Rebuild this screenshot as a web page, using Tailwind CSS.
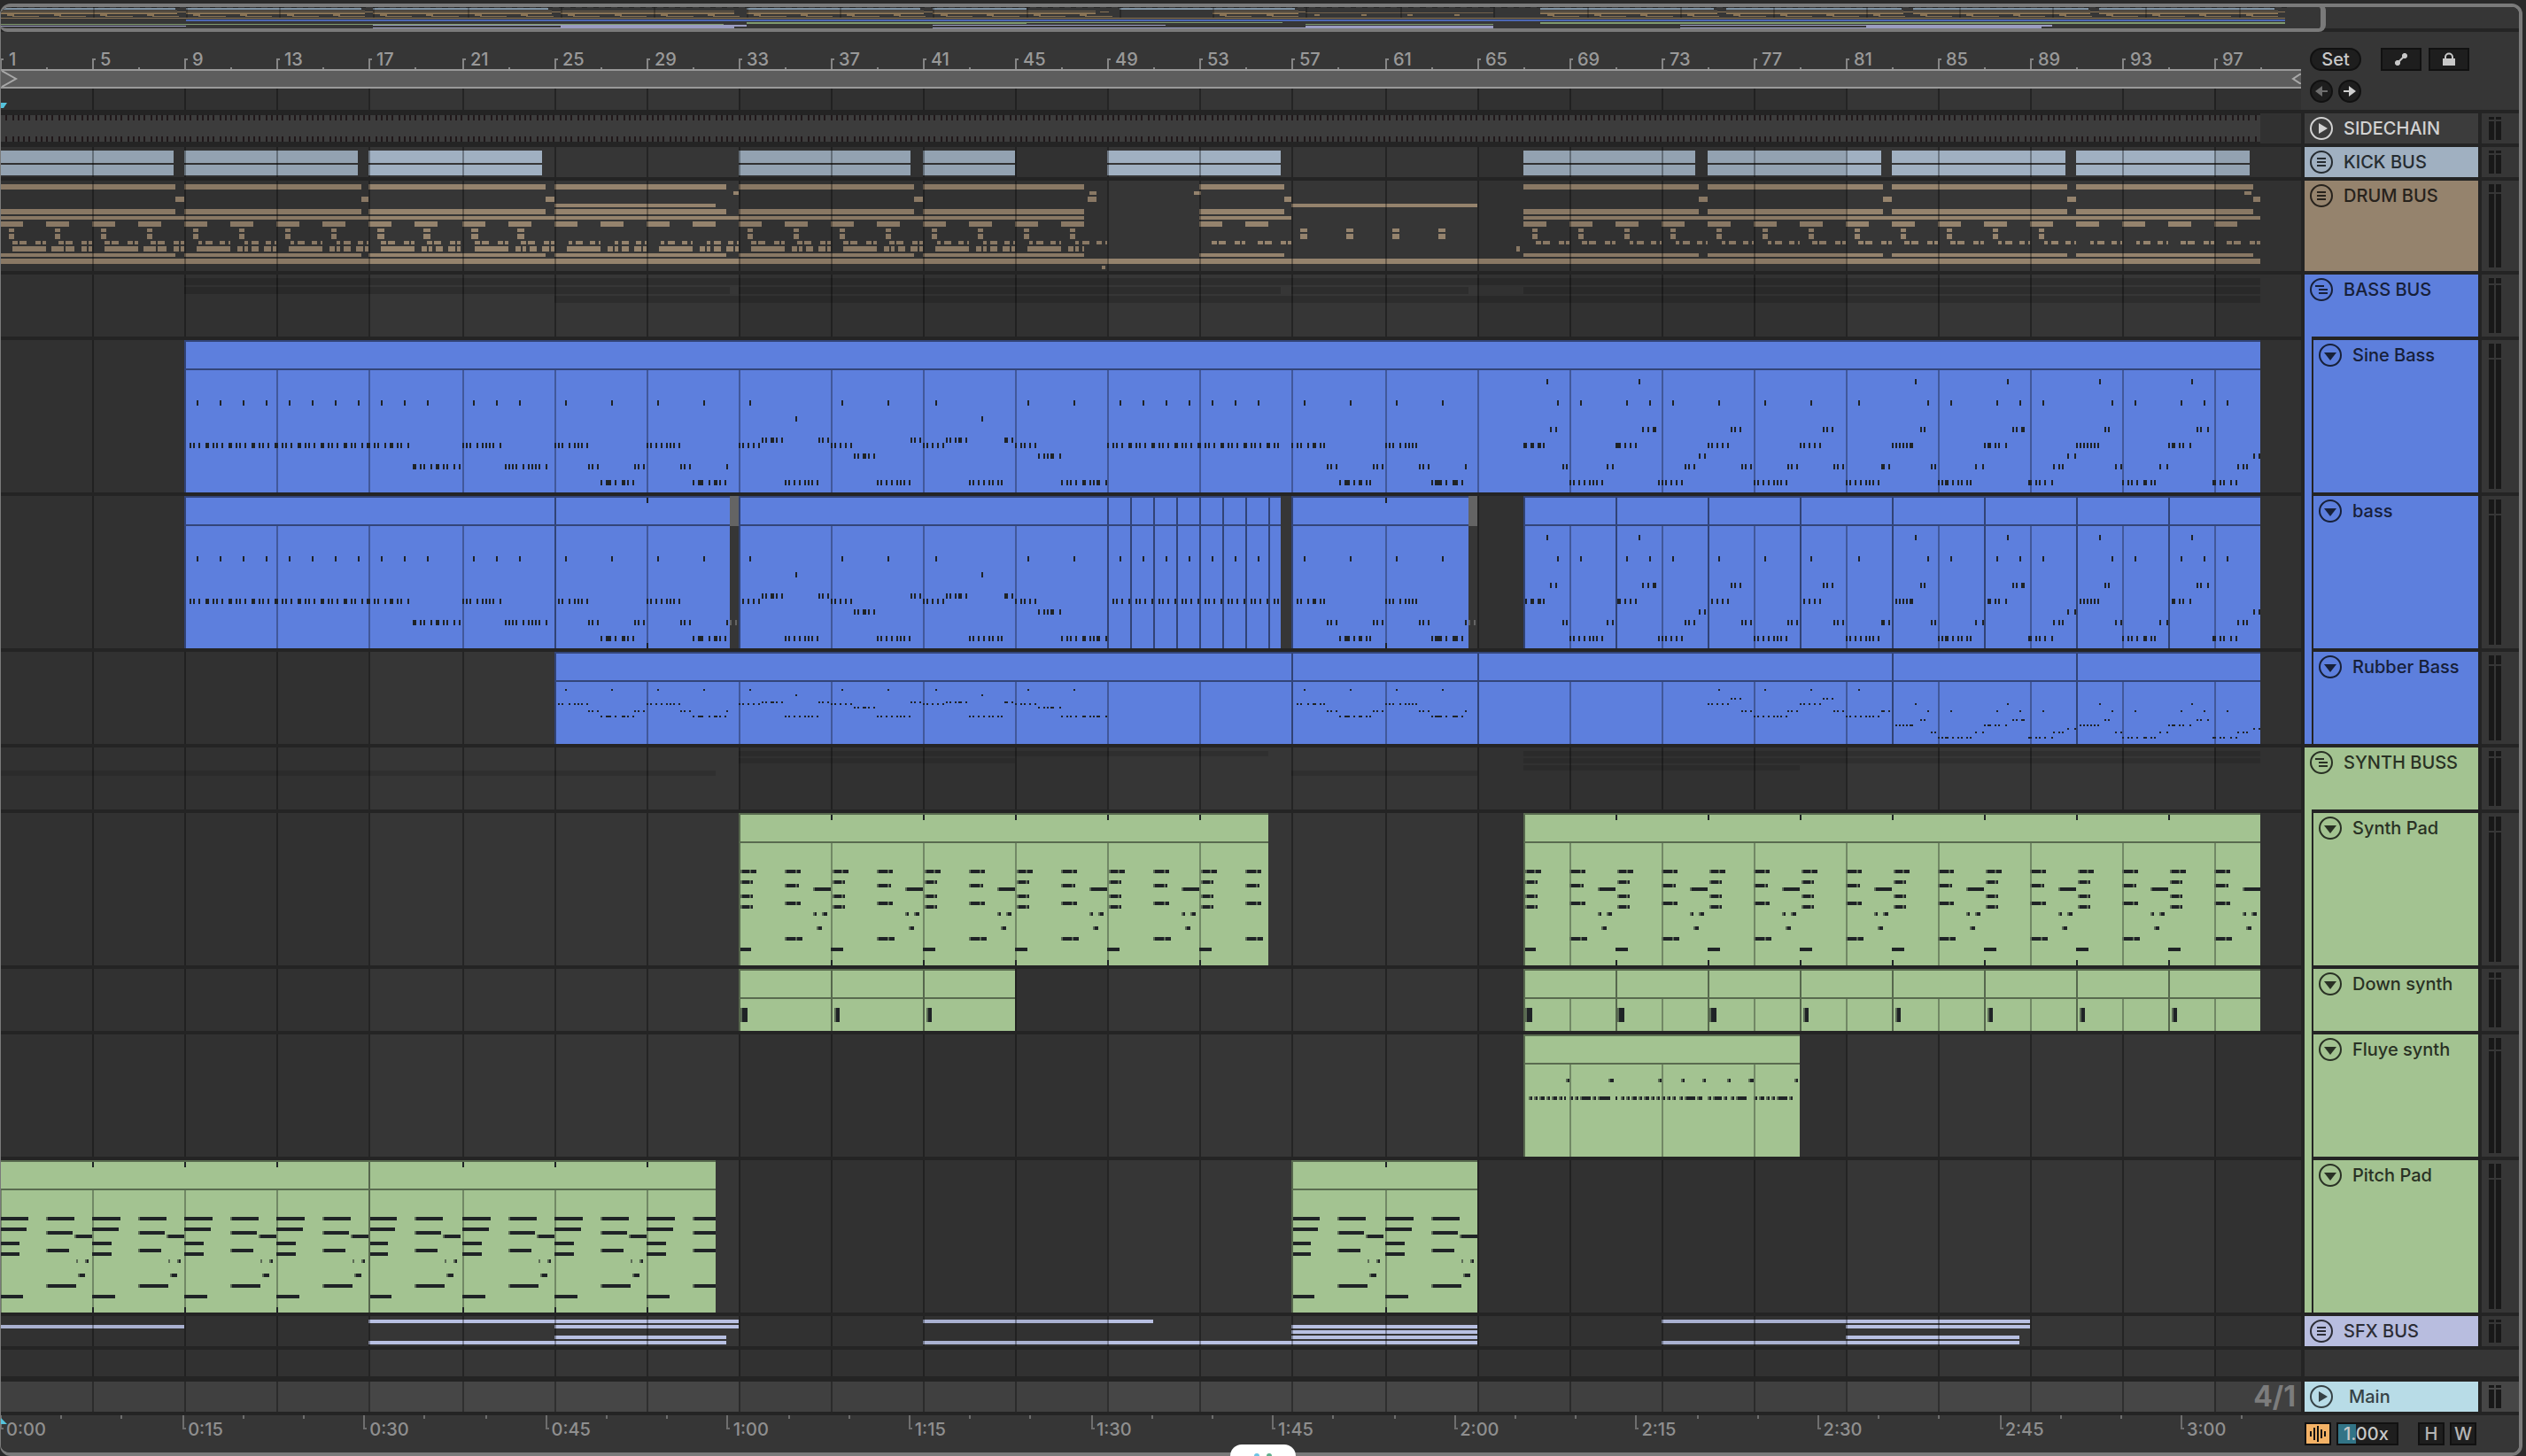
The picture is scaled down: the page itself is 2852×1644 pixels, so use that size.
<!DOCTYPE html>
<html lang="en">
<head>
    <meta charset="UTF-8">
    <meta name="viewport" content="width=device-width, initial-scale=1.0">
    <title>Arrangement View</title>
    <script src="https://cdn.jsdelivr.net/npm/@tailwindcss/browser@4"></script>
</head>
<body class="min-h-screen bg-[#2a2a2a] pt-1 pr-1 font-['Inter',sans-serif] text-xl leading-6 font-medium">

    <main class="overflow-hidden rounded-xl border-4 border-l border-[#7a7a7a] bg-[#242424]">

        <!-- Overview -->
        <div class="relative mb-1 h-6 bg-[#363636]">
            <svg id="overview" class="block h-full w-full" viewBox="1 0 2812 24" preserveAspectRatio="none"></svg>
            <div class="absolute -top-1 -left-px h-8 w-[92.35%] rounded-lg border-4 border-r-[6px] border-l-0 border-[#7a7a7a]"></div>
        </div>

        <!-- Rulers and locator controls -->
        <div class="mb-1 flex bg-[#363636]">
            <div class="min-w-0 flex-1">
                <div class="relative h-[42px]">
                    <svg id="barTicks" class="absolute inset-0 h-full w-full" viewBox="1 0 2597 42" preserveAspectRatio="none"></svg>
                    <div id="barLabels" class="relative grid pt-[19px] text-[#999999]"></div>
                </div>
                <div class="flex h-[22px] items-center justify-between border-y-2 border-[#999999] bg-[#5d5d5d]">
                    <svg class="h-[18px] w-5" viewBox="0 0 20 18" fill="none" stroke="#a8a8a8" stroke-width="2"><path d="M1 0L17 9L1 18"/></svg>
                    <svg class="h-3 w-3" viewBox="0 0 12 12" fill="none" stroke="#a8a8a8" stroke-width="2"><path d="M12 0L3 6L12 12"/></svg>
                </div>
                <svg id="scrub" class="block h-6 w-full" viewBox="1 0 2597 24" preserveAspectRatio="none"></svg>
            </div>
            <div class="w-[246px] pt-[18px] pl-[10px]">
                <div class="flex items-center">
                    <button class="h-[26px] w-[58px] rounded-full border-2 border-[#111111] bg-[#1e1e1e] leading-5 text-[#c8c8c8]">Set</button>
                    <button aria-label="Automation" class="ml-[22px] flex h-[26px] w-[46px] items-center justify-center border-2 border-[#111111] bg-[#1e1e1e]">
                        <svg class="h-4 w-4" viewBox="0 0 16 16" fill="#c8c8c8" stroke="#c8c8c8"><path stroke-width="2" d="M4 12L12 4"/><circle cx="4" cy="12" r="2.6"/><circle cx="12" cy="4" r="2.6"/></svg>
                    </button>
                    <button aria-label="Lock envelopes" class="ml-2 flex h-[26px] w-[46px] items-center justify-center border-2 border-[#111111] bg-[#1e1e1e]">
                        <svg class="h-4 w-4" viewBox="0 0 16 16"><rect x="1" y="7" width="14" height="8" fill="#c8c8c8"/><path d="M4 8V5.500a4 4 0 0 1 8 0V8" fill="none" stroke="#c8c8c8" stroke-width="2"/></svg>
                    </button>
                </div>
                <div class="mt-[10px] flex gap-[6px]">
                    <button aria-label="Previous locator" class="flex h-[26px] w-[26px] items-center justify-center rounded-full border-2 border-[#111111] bg-[#1e1e1e]">
                        <svg class="h-4 w-4 shrink-0" viewBox="0 0 16 16" fill="#6e6e6e"><path d="M1 8L9 2V7H15V9H9V14Z"/></svg>
                    </button>
                    <button aria-label="Next locator" class="flex h-[26px] w-[26px] items-center justify-center rounded-full border-2 border-[#111111] bg-[#1e1e1e]">
                        <svg class="h-4 w-4 shrink-0" viewBox="0 0 16 16" fill="#d0d0d0"><path d="M15 8L7 2V7H1V9H7V14Z"/></svg>
                    </button>
                </div>
            </div>
        </div>

        <!-- Tracks are filled in by the script below -->
        <div id="tracks"></div>

        <!-- Time ruler and footer controls -->
        <div class="flex h-[42px] bg-[#363636]">
            <div class="relative min-w-0 flex-1">
                <svg id="timeTicks" class="absolute inset-0 h-full w-full" viewBox="1 0 2597 42" preserveAspectRatio="none"></svg>
                <div id="timeLabels" class="relative grid pt-1 text-[#8f8f8f]"></div>
            </div>
            <div class="flex w-[246px] items-start pt-2 pl-1">
                <button aria-label="Warp" class="flex h-[26px] w-[30px] items-center justify-center border-2 border-[#111111] bg-[#f4b266]">
                    <svg class="h-5 w-5" viewBox="0 0 20 20" stroke="#111111" stroke-width="2"><path d="M2 7V13M6 3V17M10 1V19M14 5V15M18 7V13"/></svg>
                </button>
                <input aria-label="Playback rate" value="1.00x" class="ml-[6px] h-[26px] w-[70px] border-2 border-[#111111] bg-linear-to-r from-[#327486] from-30% to-[#1e1e1e] to-30% pl-[6px] text-[#c8c8c8] outline-none">
                <button class="ml-[22px] h-[26px] w-[30px] border-2 border-[#111111] bg-[#1e1e1e] leading-5 text-[#b5b5b5]">H</button>
                <button class="ml-[6px] h-[26px] w-[30px] border-2 border-[#111111] bg-[#1e1e1e] leading-5 text-[#b5b5b5]">W</button>
            </div>
        </div>
    </main>

    <!-- Dock handle -->
    <div class="fixed bottom-0 left-1/2 flex h-[13px] w-[74px] -translate-x-1/2 items-end justify-center gap-2 overflow-hidden rounded-t-2xl bg-white">
        <span class="h-[3px] w-[6px] rounded-t-full bg-[#6cc4e4]"></span>
        <span class="h-[3px] w-[6px] rounded-t-full bg-[#5fae8c]"></span>
    </div>

    <script>
        const END = 2552;
        const GRID = [0, 104, 208, 312, 416, 522, 626, 730, 834, 938, 1042, 1146, 1250, 1354, 1458, 1564, 1668, 1772, 1876, 1980, 2084, 2188, 2292, 2396, 2500];
        const SHADE = [[0, 416], [834, 1250], [1668, 2084], [2500, 2598]];
        const BLUE = '#5d7fdd', GREEN = '#a3c391', INK = '#1f2326';

        // ---- drawing helpers ----
        const box = (x, y, w, h) => `M${x} ${y}h${w}v${h}h${-w}z`;
        const path = (d, fill, op = 1) => `<path d="${d}" fill="${fill}" fill-opacity="${op}" shape-rendering="crispEdges"/>`;
        const spans = (list, y, h) => list.map(([a, b]) => box(a, y, b - a, h)).join('');
        const gridLines = (h, y = 0) => GRID.slice(1).map(x => box(x, y, 2, h)).join('');
        const shade = h => path(spans(SHADE, 0, h), '#000', 0.08);
        const grid = h => path(gridLines(h), '#000', 0.32);
        const steps = (from, to, by) => { const r = []; for (let x = from; x < to; x += by) r.push(x); return r; };

        // ---- bass notes: row offset -> "x" or "x:width" ----
        const NOTES = {
            44: '1746 1850 2162 2266 2370 2474',
            68: '222 248 274 300 326 352 378 404 430 456 482 534 560 586 638 690 742 794 846 950 1002 1056 1160 1212 1264 1290 1316 1342 1368 1394 1420 1472 1524 1576 1628 1758 1784 1836 1862 1888 1940 1992 2044 2098 2176 2202 2254 2280 2306 2384 2410 2462 2488 2514',
            86: '898 1108',
            98: '1750 1756 1854 1860 1866:4 1954 1958 1964 2058 2062 2068 2168 2172 2272 2276 2282:4 2376 2380 2480 2484 2492',
            110: '860 864 870:4 876 882 924 928 934 1028 1032 1038 1068 1072 1078 1082:4 1090 1134:4 1142',
            116: '214 218 224 232:4 240 244 250 258:4 266 270 276 284:4 292 296 302 310:4 318 322 328 336:4 344 348 354 362:4 370 374 380 388:4 396 400 408 414:4 422 426 434 440:4 448 452 460 522 526 530 538 544 548 552 556 564 626 630 634 642 648 652 656 662 730 734 740 746 752 756 760 766 834 838 844 850 856 938 942 948 954 960 1042 1046 1052 1058 1064 1146 1152 1156 1162 1168 1250 1256 1260 1266 1274:4 1282 1286 1292 1300:4 1308 1312 1318 1326:4 1334 1338 1344 1352:4 1360 1364 1370 1378:4 1386 1390 1396 1404:4 1412 1416 1422 1430:4 1438 1442 1458 1464 1468 1476 1482:4 1490 1494 1564 1568 1572 1580 1586 1590 1594 1598 1720:4 1728:4 1736:4 1742 1824:6 1834 1840 1846 1928 1932 1938 1944 1950 2032 2036 2042 2048 2054 2136 2140 2144 2148 2152 2156:4 2240 2244:4 2252 2256 2264 2344 2348 2352 2356 2360 2364 2368 2448 2452:4 2460 2464 2472',
            128: '964 968 974:4 980 986 1172 1178 1182 1186:4 1196 1918 1924 2334 2342 2544 2550',
            140: '466:4 474 478 486 492:4 500 504 512 518 570 574 578 582 590 596 600 604 608 616 664 668 674 716 720 726 768 772 778 820 1498 1502 1508 1550 1554 1560 1602 1606 1612 1654 1764 1768 1814 1820 1902 1906 1912 1966 1970 1976 2018 2022 2028 2070 2074 2080 2124:4 2132 2180 2184 2230 2238 2318 2324 2328 2388 2394 2438 2446 2526 2532 2536',
            158: '678 684:6 694 702:4 708 714 782 788:6 800 806:4 812 818 886 890 896 902 908 912 916 922 990 994 1000 1006 1012 1016 1020 1026 1094 1098 1104 1110 1116 1120 1126 1130 1198 1204 1208 1214 1222:4 1230 1234 1238:4 1248 1512 1518:6 1528 1534:4 1542 1546 1616 1620:8 1632 1640:4 1644 1650 1772 1776 1782 1788 1794 1798 1802 1808 1872 1876 1880 1886 1892 1898 1980 1984 1990 1996 2002 2006 2010 2016 2084 2088 2094 2100 2106 2110 2114 2120 2188 2192 2196:4 2204 2210 2214 2220 2224 2290:4 2298 2302 2308 2316 2396 2402 2406 2412 2420:4 2428 2432 2498:4 2506 2510 2518 2524'
        };
        const NOTE_LIST = Object.entries(NOTES).flatMap(([y, s]) => s.split(' ').map(n => {
            const [x, w] = n.split(':').map(Number);
            return { x, y: +y, w: w || 2 };
        }));

        // ---- MIDI clip: body, header line, bar lines, notes, clip edges ----
        function midi(h, color, clips, edges, notes, ticks = []) {
            const inside = x => clips.some(([a, b]) => x >= a && x < b);
            return path(spans(clips, 0, h), color)
                + path(GRID.filter(x => inside(x) && !edges.includes(x)).map(x => box(x, 34, 2, h - 34)).join(''), '#000', 0.3)
                + path(spans(clips, 0, 2) + spans(clips, 32, 2), '#000', 0.45)
                + notes
                + path(edges.map(x => box(x, 2, 2, 30) + box(x, 34, 2, h - 34)).join(''), color)
                + path(edges.map(x => box(x, 2, 2, 30) + box(x, 34, 2, h - 34)).join(''), '#000', 0.47)
                + path(ticks.map(x => box(x, 2, 2, 6) + box(x, h - 6, 2, 6)).join(''), INK);
        }

        function padNotes(starts, shape, limit) {
            let ink = '', soft = '';
            starts.forEach(s => shape.forEach(([y, x, w, cut]) => {
                const a = s + x, b = Math.min(a + w, limit(s));
                if (b <= a) return;
                ink += box(a, y, b - a, 4);
                if (x > 0) soft += box(a, y, 2, 4);
                if (cut) soft += box(s + cut, y, 2, 4);
            }));
            return path(ink, INK) + path(soft, GREEN, 0.45);
        }
        const SYNTH_SHAPE = [[64, 2, 18, 12], [76, 2, 14, 12], [92, 2, 14, 12], [104, 2, 14, 12], [152, 0, 14], [64, 52, 18, 64], [80, 52, 16, 64], [100, 52, 18, 64], [140, 52, 20, 64], [84, 84, 20], [112, 84, 4], [112, 94, 6], [128, 88, 6]];
        const PITCH_SHAPE = [[64, 0, 32], [76, 0, 30], [92, 0, 22], [104, 0, 22], [152, 0, 26], [64, 52, 32], [80, 52, 30], [100, 52, 26], [140, 52, 34], [84, 84, 20], [112, 86, 2], [112, 96, 4], [128, 88, 8]];

        // ---- lane contents ----
        const KICKS = [[0, 196], [208, 404], [416, 612], [834, 1028], [1042, 1146], [1250, 1446], [1720, 1914], [1928, 2124], [2136, 2332], [2344, 2540]];
        const LOOPS = [[0, 198], [208, 408], [416, 616], [626, 820], [834, 1032], [1042, 1224], [1354, 1450], [1720, 1918], [1928, 2126], [2136, 2334], [2344, 2544]];
        const FILLS = [[198, 208], [408, 416], [616, 626], [1032, 1042], [1228, 1238], [1450, 1458], [1918, 1928], [2126, 2136], [2334, 2344], [2544, END]];
        const halves = GRID.flatMap(x => [x, x + 52]);
        const HATS = [...halves.filter(x => x < 1200), 1354, 1406, ...steps(1720, END, 52)];
        const SNARES = [...HATS.filter(x => !(x >= 626 && x < 834) && x < 2340 && !(x >= 1300 && x < 1458)), 1458, 1510, 1562, 1614];

        function sidechain() {
            const beats = steps(1, 392, 1).map(k => 2 * Math.round(k * 6.51 / 2));
            return shade(34) + grid(34)
                + path(box(0, 0, END, 34), '#242424') + path(box(0, 2, END, 30), '#3c3c3c')
                + path(beats.map(x => box(x, 2, 2, 6) + box(x, 26, 2, 6)).join(''), '#20181a');
        }
        function kick() {
            return path(spans(KICKS, 4, 14) + spans(KICKS, 20, 12), '#a0b0c1') + shade(34) + grid(34);
        }
        function drums() {
            let d = spans(LOOPS, 4, 6) + spans(LOOPS, 32, 6) + spans(LOOPS, 82, 4) + spans(FILLS, 18, 6);
            d += spans([[828, 834], [1230, 1238], [1348, 1356], [2534, 2542]], 12, 4);
            d += spans([[626, 808], [1458, 1668]], 26, 4);
            d += spans([[0, 1224], [1354, 1458], [1720, END]], 40, 4);
            d += HATS.map(x => box(x, 46, 26, 6)).join('');
            d += SNARES.map(x => box(x + 10, 54, x >= 416 && x < 626 || x > 1400 && x < 1700 ? 8 : 6, 4) + box(x + 10, 60, x >= 416 && x < 626 || x > 1400 && x < 1700 ? 8 : 6, 6)).join('');
            HATS.forEach((x, i) => {
                const shape = (i >> 2) % 2 ? [[16, 4], [24, 8], [40, 6], [50, 2]] : [[14, 6], [22, 8], [40, 6], [48, 4]];
                shape.forEach(([o, w]) => d += box(x + o, 68, w, 4));
            });
            GRID.filter(x => x < 1200).forEach((x, i) => {
                const shape = i < 2 ? [[14, 38], [58, 14], [74, 10], [92, 6], [100, 4]] : [[14, 38], [60, 6], [68, 4], [76, 8], [90, 8], [100, 4]];
                shape.forEach(([o, w]) => { if (x + o < 1224) d += box(x + o, 74, Math.min(w, 1224 - x - o), 6); });
            });
            d += box(1712, 74, 4, 6) + box(0, 88, END, 6) + box(1244, 96, 4, 4);
            return path(d, '#95836d') + shade(102) + grid(102);
        }
        function bassBus() {
            return path(box(208, 4, END - 208, 8) + spans([[208, 824], [834, 1446], [1458, 1658], [1720, END]], 14, 8) + box(626, 24, END - 626, 8), '#000', 0.15) + shade(70) + grid(70);
        }
        function synthBus() {
            return path(spans([[834, 1432], [1720, END]], 4, 6) + spans([[834, 1146], [1720, END]], 12, 6) + spans([[1720, 2032]], 20, 6) + spans([[0, 808], [1458, 1668]], 26, 6), '#000', 0.12) + shade(70) + grid(70);
        }
        const base = h => shade(h) + grid(h);
        const bassEdges = [208, 626, 834, ...steps(1250, 1446, 26), 1458, ...steps(1720, END, 104)];
        const tall = keep => path(NOTE_LIST.filter(keep).map(n => box(n.x, n.y, n.w, 6)).join(''), INK);

        function sine() {
            return base(172) + midi(172, BLUE, [[208, END]], [208], tall(() => true));
        }
        function bass() {
            return base(172) + midi(172, BLUE, [[208, 824], [834, 1446], [1458, 1658], [1720, END]], bassEdges, tall(() => true), [730, 1564])
                + path(box(824, 0, 10, 34) + box(1658, 0, 10, 34) + box(824, 140, 2, 6) + box(830, 140, 2, 6) + box(1658, 140, 2, 6) + box(1664, 140, 2, 6), '#646464');
        }
        function rubber() {
            const on = NOTE_LIST.filter(n => n.x >= 626 && n.x < 1250 || n.x >= 1458 && n.x < 1668 || n.x >= 1928);
            const d = on.map(n => box(n.x, 42 + (n.y - 68) / 3 + (n.x >= 2136 ? 24 : 0), n.w, 2)).join('');
            return base(104) + midi(104, BLUE, [[626, END]], [626, 1458, 1668, 2136, 2344], path(d, INK));
        }
        function synthPad() {
            const starts = [...steps(834, 1432, 104), ...steps(1720, END, 104)];
            return base(172) + midi(172, GREEN, [[834, 1432], [1720, END]], [834, 1720],
                padNotes(starts, SYNTH_SHAPE, s => s < 1500 ? 1432 : END), starts.filter(x => x !== 834 && x !== 1720));
        }
        function downSynth() {
            const hits = [[836, 8], [942, 6], [1046, 6], [1722, 8], [1826, 8], [1930, 8], [2036, 6], [2140, 6], [2244, 6], [2348, 6], [2452, 6]];
            return base(70) + midi(70, GREEN, [[834, 1146], [1720, END]], [834, 938, 1042, ...steps(1720, END, 104)],
                path(hits.map(([x, w]) => box(x, 44, w, 16)).join(''), INK) + path(hits.map(([x]) => box(x, 44, 2, 16)).join(''), GREEN, 0.45));
        }
        function fluye() {
            const high = '1768:4 1816:6 1872:4 1898:4 1922:4 1950:4 1974:6 2026:4';
            const low = '1726:4 1732:4 1738:6 1746:4 1752:6 1760:4 1766:2 1772:4 1778:4 1784:12 1798:4 1804:14 1824:2 1830:4 1836:4 1842:6 1850:4 1856:6 1864:4 1870:4 1876:4 1882:4 1888:4 1896:4 1902:12 1916:6 1928:4 1934:10 1946:4 1954:4 1960:12 1980:4 1986:6 1994:4 2000:4 2006:12 2020:4';
            const row = (s, y) => s.split(' ').map(n => [...n.split(':').map(Number), y]);
            const all = [...row(high, 50), ...row(low, 70)];
            return base(138) + midi(138, GREEN, [[1720, 2032]], [1720],
                path(all.map(([x, w, y]) => box(x, y, w, 4)).join(''), INK) + path(all.filter(n => n[1] > 2).map(([x, w, y]) => box(x, y, 2, 4)).join(''), GREEN, 0.45));
        }
        function pitchPad() {
            const starts = [...GRID.slice(0, 8), 1458, 1564];
            return base(172) + midi(172, GREEN, [[0, 808], [1458, 1668]], [416, 1458],
                padNotes(starts, PITCH_SHAPE, s => s < 900 ? 808 : 1668), [104, 208, 312, 522, 626, 730, 1564]);
        }
        const SFX = [
            [[416, 834], [1042, 1302], [1876, 2292]],
            [[0, 208], [626, 834], [1458, 1668], [2084, 2292]],
            [[1458, 1668]],
            [[626, 820], [1458, 1668], [2084, 2280]],
            [[416, 820], [1042, 1668], [1876, 2280]]
        ];
        function sfx() {
            return path(SFX.map((row, i) => spans(row, 4 + i * 6, 4)).join(''), '#b8c0e2') + shade(34) + grid(34);
        }

        // ---- track rows ----
        const ICONS = {
            play: '<path d="M10 7L20 13L10 19Z" fill="currentColor"/>',
            lines: '<path d="M8 9H18M8 13H18M8 17H18" stroke="currentColor" stroke-width="2"/>',
            group: '<path d="M6 9H16M10 13H20M10 17H20" stroke="currentColor" stroke-width="2"/>',
            fold: '<path d="M6 10H20L13 19Z" fill="currentColor"/>'
        };
        const TRACKS = [
            { name: 'SIDECHAIN', icon: 'play', size: 'h-[34px]', h: 34, bg: 'bg-[#3c3c3c]', fg: 'text-[#d2d2d2]', draw: sidechain },
            { name: 'KICK BUS', icon: 'lines', size: 'h-[34px]', h: 34, bg: 'bg-[#a0b0c1]', fg: 'text-[#262c31]', draw: kick },
            { name: 'DRUM BUS', icon: 'lines', size: 'h-[102px]', h: 102, bg: 'bg-[#95836d]', fg: 'text-[#27221c]', draw: drums },
            { name: 'BASS BUS', icon: 'group', size: 'h-[70px]', h: 70, bg: 'bg-[#5d7fdd]', fg: 'text-[#172039]', draw: bassBus, group: 'open' },
            { name: 'Sine Bass', icon: 'fold', size: 'h-[172px]', h: 172, bg: 'bg-[#5d7fdd]', fg: 'text-[#172039]', draw: sine, group: 'in' },
            { name: 'bass', icon: 'fold', size: 'h-[172px]', h: 172, bg: 'bg-[#5d7fdd]', fg: 'text-[#172039]', draw: bass, group: 'in' },
            { name: 'Rubber Bass', icon: 'fold', size: 'h-[104px]', h: 104, bg: 'bg-[#5d7fdd]', fg: 'text-[#172039]', draw: rubber, group: 'last' },
            { name: 'SYNTH BUSS', icon: 'group', size: 'h-[70px]', h: 70, bg: 'bg-[#a3c391]', fg: 'text-[#293124]', draw: synthBus, group: 'open' },
            { name: 'Synth Pad', icon: 'fold', size: 'h-[172px]', h: 172, bg: 'bg-[#a3c391]', fg: 'text-[#293124]', draw: synthPad, group: 'in' },
            { name: 'Down synth', icon: 'fold', size: 'h-[70px]', h: 70, bg: 'bg-[#a3c391]', fg: 'text-[#293124]', draw: downSynth, group: 'in' },
            { name: 'Fluye synth', icon: 'fold', size: 'h-[138px]', h: 138, bg: 'bg-[#a3c391]', fg: 'text-[#293124]', draw: fluye, group: 'in' },
            { name: 'Pitch Pad', icon: 'fold', size: 'h-[172px]', h: 172, bg: 'bg-[#a3c391]', fg: 'text-[#293124]', draw: pitchPad, group: 'last' },
            { name: 'SFX BUS', icon: 'lines', size: 'h-[34px]', h: 34, bg: 'bg-[#b8bddf]', fg: 'text-[#2c2d36]', draw: sfx },
            { name: '', size: 'h-[30px]', h: 30, draw: () => base(30) },
            { name: 'Main', icon: 'play', size: 'h-[34px]', h: 34, bg: 'bg-[#b8dce7]', fg: 'text-[#364246]', draw: () => base(34), main: true }
        ];

        function header(t) {
            const inner = `<div class="flex items-start ${t.group === 'in' || t.group === 'last' ? 'gap-3 pl-[6px]' : t.main ? 'gap-[18px] pl-[6px]' : 'gap-3 pl-[6px]'} pt-1 min-w-0 flex-1 ${t.bg} ${t.fg}">
                <button aria-label="${t.name} options" class="shrink-0"><svg class="block h-[26px] w-[26px]" viewBox="0 0 26 26" fill="none"><circle cx="13" cy="13" r="12" stroke="currentColor" stroke-width="2"/>${ICONS[t.icon]}</svg></button>
                <span class="truncate leading-[26px]">${t.name}</span>
            </div>`;
            if (t.group === 'open') return `<div class="-mb-1 flex w-[196px] flex-col">${inner}<div class="h-1 w-2 ${t.bg}"></div></div>`;
            if (t.group === 'in') return `<div class="flex w-[196px] gap-[2px]"><div class="-mb-1 w-2 ${t.bg}"></div>${inner}</div>`;
            if (t.group === 'last') return `<div class="flex w-[196px] gap-[2px]"><div class="w-2 ${t.bg}"></div>${inner}</div>`;
            return `<div class="flex w-[196px]">${inner}</div>`;
        }

        const METER = '<div class="flex w-[6px] flex-col gap-[2px]"><div class="h-[10%] bg-[#181818]"></div><div class="flex-1 bg-[#181818]"></div></div>';

        document.getElementById('tracks').innerHTML = TRACKS.map(t => `
            <section class="${t.name ? 'mb-1' : 'mb-[6px]'} flex gap-1 ${t.size}">
                <div class="relative min-w-0 flex-1 ${t.main ? 'bg-[#464646]' : 'bg-[#363636]'}">
                    <svg class="absolute inset-0 h-full w-full" viewBox="1 0 2597 ${t.h}" preserveAspectRatio="none">${t.draw()}</svg>
                    ${t.main ? '<div class="relative pr-[6px] text-right text-[32px] leading-[34px] font-bold text-[#7c7c7c]">4/1</div>' : ''}
                </div>
                ${t.name ? header(t) + `<div class="flex w-[42px] gap-[2px] py-1 pl-2 ${t.main ? 'bg-[#464646]' : 'bg-[#363636]'}">${METER}${METER}</div>` : '<div class="w-[242px] bg-[#363636]"></div>'}
            </section>`).join('');

        // ---- rulers ----
        const mids = GRID.map(x => x + 52);
        document.getElementById('barTicks').innerHTML = path(GRID.map(x => box(x, 30, 2, 12) + box(x + 2, 30, 2, 2)).join('') + mids.map(x => box(x, 40, 2, 2)).join(''), '#858585');
        const bars = document.getElementById('barLabels');
        bars.style.gridTemplateColumns = GRID.map((x, i) => `minmax(0, ${(GRID[i + 1] || 2598) - Math.max(x, 1)}fr)`).join(' ');
        bars.innerHTML = GRID.map((x, i) => `<span class="pl-[9px]">${1 + i * 4}</span>`).join('');
        document.getElementById('scrub').innerHTML = base(24) + '<path d="M1 16H8L4 22H1Z" fill="#55c3dc"/>';

        const times = steps(0, 13, 1).map(i => i * 205.2);
        document.getElementById('timeTicks').innerHTML = path(times.map(x => 2 * Math.round(x / 2)).map(x => box(x, 0, 2, 16) + box(x + 2, 14, 2, 2)).join('')
            + times.flatMap(x => [x + 68.4, x + 136.8]).map(x => box(2 * Math.round(x / 2), 0, 2, 4)).join(''), '#6e6e6e') + '<path d="M0 2L8 10H0Z" fill="#55c3dc"/>';
        const clock = document.getElementById('timeLabels');
        clock.style.gridTemplateColumns = times.map((x, i) => `minmax(0, ${i < 12 ? 205 : 135}fr)`).join(' ');
        clock.innerHTML = times.map((x, i) => `<span class="pl-[6px]">${Math.floor(i / 4)}:${String(i % 4 * 15).padStart(2, '0')}</span>`).join('');

        // ---- overview: every track squeezed into a few pixels ----
        const brown = '#8a7456';
        document.getElementById('overview').innerHTML =
            path(steps(0, END, 13).map(x => box(x, 0, 6, 1)).join(''), '#222')
            + path(spans(KICKS, 1, 2), '#8093a3')
            + path(spans(LOOPS, 4, 1), brown, 0.7) + path(spans(LOOPS, 6, 2), brown) + path(spans(FILLS, 5, 1), brown)
            + path(spans([[1458, 1668]], 6, 1), brown, 0.7)
            + path(HATS.map(x => box(x + 8, 8, 8, 2)).join('') + HATS.map(x => box(x + 14, 10, 30, 1)).join('') + [1468, 1520, 1572, 1624].map(x => box(x, 8, 6, 2)).join(''), brown)
            + path(box(0, 12, END, 1), brown)
            + path(box(208, 14, END - 208, 2), '#4c67b4')
            + path(spans([[834, 1432], [1720, END]], 17, 1) + spans([[834, 1146], [1720, END]], 18, 1) + spans([[0, 808], [1458, 1668]], 19, 1), '#7f9a70')
            + path(spans(SFX[0], 20, 1) + spans(SFX[1], 21, 1) + spans(SFX[3], 22, 1) + spans(SFX[4], 23, 1), '#9a9cc0')
            + path(gridLines(12), '#000', 0.25);
    </script>
</body>
</html>
